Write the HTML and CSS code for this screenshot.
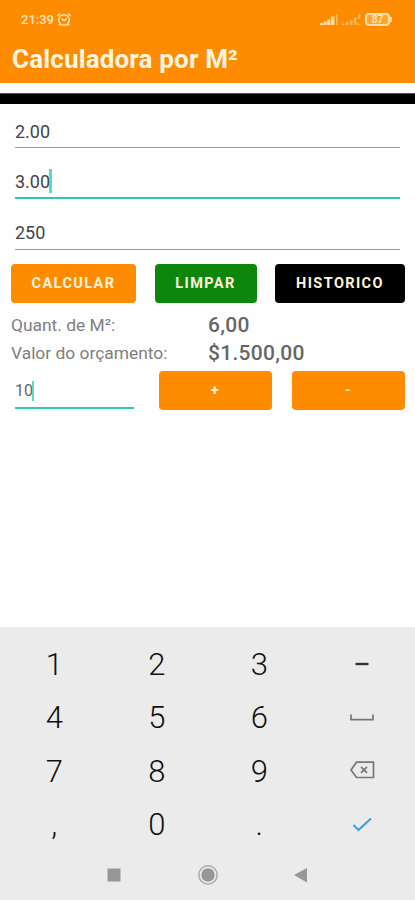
FILE: index.html
```html
<!DOCTYPE html>
<html lang="pt-BR">
  <head>
    <meta charset="utf-8" />
    <title>Calculadora por M²</title>
    <link rel="stylesheet" href="styles.css">
  </head>
  <body>
    <header class="app-header">
      <div class="status-bar">
        <span class="clock">21:39</span>
        <svg class="alarm" width="16" height="15" viewBox="0 0 16 15">
          <circle cx="8" cy="8" r="5.3" />
          <path d="M1.3 4 L4 1.5 M14.7 4 L12 1.5 M5.8 6.8 L8 8.6 L10.6 6.6 M4.2 12 L3 13.6 M11.8 12 L13 13.6" />
        </svg>
        <svg class="signal" width="19" height="13" viewBox="0 0 19 13">
          <path d="M0 10h3v2H0z M3.6 8.5h3V12h-3z M7.2 6.5h3V12h-3z M10.8 3.5h3.6V12h-3.6z" />
          <path class="faint" d="M16 1h1.6v11H16z" />
        </svg>
        <svg class="signal weak" width="20" height="13" viewBox="0 0 20 13">
          <path d="M0 10.5h2.5V12H0z M4 9h2.5v3H4z M8 7h2.5v5H8z M12 4.5h2.5V12H12z M16 1h2.4v5H16z M15.5 9.5l3.5 2.5h-3.5z" />
        </svg>
        <div class="battery">87</div>
      </div>
      <h1>Calculadora por M²</h1>
    </header>
    <div class="divider"></div>

    <main class="container">
      <form id="budgetForm">
        <div class="field"><span>2.00</span></div>
        <div class="field active"><span>3.00</span><i class="cursor"></i></div>
        <div class="field last"><span>250</span></div>
        <div class="buttons">
          <button type="button" class="btn calc">CALCULAR</button>
          <button type="button" class="btn clear">LIMPAR</button>
          <button type="button" class="btn history">HISTORICO</button>
        </div>
      </form>

      <dl class="results">
        <dt>Quant. de M²:</dt>
        <dd>6,00</dd>
        <dt class="budget">Valor do orçamento:</dt>
        <dd>$1.500,00</dd>
      </dl>

      <div class="adjust">
        <div class="field active small"><span>10</span><i class="cursor"></i></div>
        <button type="button" class="btn">+</button>
        <button type="button" class="btn">-</button>
      </div>
    </main>

    <!-- Numeric keyboard -->
    <section class="keyboard">
      <div class="keys">
        <span>1</span>
        <span>2</span>
        <span>3</span>
        <span><svg width="26" height="26" viewBox="0 0 26 26"><path class="minus" d="M6.5 13h13" /></svg></span>
        <span>4</span>
        <span>5</span>
        <span>6</span>
        <span><svg width="26" height="26" viewBox="0 0 26 26"><path d="M2 9.5v5.2h22V9.5" /></svg></span>
        <span>7</span>
        <span>8</span>
        <span>9</span>
        <span>
          <svg width="26" height="26" viewBox="0 0 26 26">
            <path d="M7.5 4.2H24.5V19.5H7.5L2 11.9z M12 8.9l6 6 M18 8.9l-6 6" />
          </svg>
        </span>
        <span>,</span>
        <span>0</span>
        <span>.</span>
        <span><svg width="26" height="26" viewBox="0 0 26 26"><path class="check" d="M4.5 13l5 5L22 6.5" /></svg></span>
      </div>
      <nav class="nav-bar">
        <svg width="22" height="22" viewBox="0 0 22 22"><path d="M4.5 4.5h13v13h-13z" /></svg>
        <svg width="22" height="22" viewBox="0 0 22 22">
          <circle class="ring" cx="11" cy="11" r="9.2" />
          <circle cx="11" cy="11" r="6.7" />
        </svg>
        <svg width="22" height="22" viewBox="0 0 22 22"><path d="M4 11L17 4v14.4z" /></svg>
      </nav>
    </section>
  </body>
</html>
```

FILE: styles.css
```css
* {
  box-sizing: border-box;
}

body {
  display: flex;
  flex-direction: column;
  height: 900px;
  margin: 0;
  background-color: #fefefe;
  font-family: Roboto, sans-serif;
  overflow: hidden;
}

.app-header {
  height: 83px;
  background-color: #ff8c00;
  color: #fff6e2;
}

.status-bar {
  display: flex;
  align-items: center;
  height: 38px;
  padding: 0 23px 0 21px;
}

.clock {
  font-size: 13px;
  font-weight: 500;
  color: #ffe5b8;
}

.alarm {
  margin: 0 auto 0 2px;
  fill: none;
  stroke: #ffe5b8;
  stroke-width: 1.5;
}

.signal {
  margin-right: 3px;
  fill: #ffe0a8;
}

.signal .faint,
.weak {
  opacity: 0.5;
}

.battery {
  position: relative;
  width: 25px;
  height: 13px;
  margin-right: 2px;
  border: 2px solid #ffdfa6;
  border-radius: 4px;
  background-color: #ffa52e;
  color: #fff0d0;
  font-size: 10px;
  font-weight: 500;
  line-height: 9px;
  text-align: center;
}

/* Battery tip */
.battery::after {
  content: "";
  position: absolute;
  top: 2px;
  right: -4px;
  width: 2px;
  height: 5px;
  background-color: #ffdfa6;
}

h1 {
  margin: 6px 0 0 12px;
  font-size: 26px;
  font-weight: 700;
  line-height: 31px;
  letter-spacing: 0.15px;
}

.divider {
  height: 11px;
  margin-top: 10px;
  border-top: 1px solid #555;
  background-color: #000;
}

.container {
  flex: 1;
  padding: 0 10px 0 11px;
}

.field {
  display: flex;
  align-items: center;
  height: 51px;
  margin: 0 5px 0 4px;
  padding-top: 2px;
  border-bottom: 1px solid #999;
  color: #444;
  font-size: 18px;
}

.field:first-child {
  height: 44px;
  padding-top: 12px;
}

.field.active {
  padding-top: 17px;
  border-bottom: 2px solid #2cc9ba;
  height: 51px;
}

.field.last {
  height: 51px;
  padding-top: 17px;
}

.cursor {
  width: 3px;
  height: 24px;
  margin-left: -1px;
  background-color: #55dccb;
}

.buttons {
  display: grid;
  grid-template-columns: 125px 102px 130px;
  justify-content: space-between;
  margin-top: 14px;
}

.btn {
  height: 39px;
  padding: 0;
  border: none;
  border-radius: 4px;
  background-color: #ff8c00;
  color: #fff3dc;
  font-family: inherit;
  font-size: 14.5px;
  font-weight: 700;
  letter-spacing: 1.4px;
}

.clear {
  background-color: #0c870c;
}

.history {
  background-color: #000;
}

.results {
  display: grid;
  grid-template-columns: 197px 1fr;
  grid-auto-rows: 28px;
  align-items: center;
  margin: 8px 0 0;
  color: #808080;
}

.results dt {
  font-size: 17.4px;
}

.results dd {
  margin: 0;
  color: #666;
  font-size: 21px;
  font-weight: 500;
  letter-spacing: 0.3px;
}

.adjust {
  display: grid;
  grid-template-columns: 128px 113px 113px;
  justify-content: space-between;
  margin-top: 4px;
}

/* Must also win over .field:first-child */
.adjust .field.small {
  height: 38px;
  margin-right: 5px;
  padding-top: 3px;
  font-size: 16px;
  color: #666;
}

.small .cursor {
  width: 2px;
  height: 20px;
}

.keyboard {
  height: 273px;
  padding-top: 10px;
  background-color: #ebebeb;
}

.keys {
  display: grid;
  grid-template-columns: repeat(4, 102.5px);
  grid-auto-rows: 53.5px;
  margin-left: 3px;
  color: #111;
  font-size: 31px;
  font-weight: 300;
}

.keys span {
  display: flex;
  align-items: center;
  justify-content: center;
  padding-top: 1px;
}

.keys svg {
  fill: none;
  stroke: #777;
  stroke-width: 1.7;
}

.keys .minus {
  stroke: #333;
  stroke-width: 2.4;
}

.keys .check {
  stroke: #389fda;
  stroke-width: 2;
}

.nav-bar {
  display: flex;
  justify-content: space-between;
  padding: 13px 103px 0 103px;
}

.nav-bar svg {
  fill: #979797;
}

.nav-bar .ring {
  fill: none;
  stroke: #aaa;
  stroke-width: 1.5;
}
```
